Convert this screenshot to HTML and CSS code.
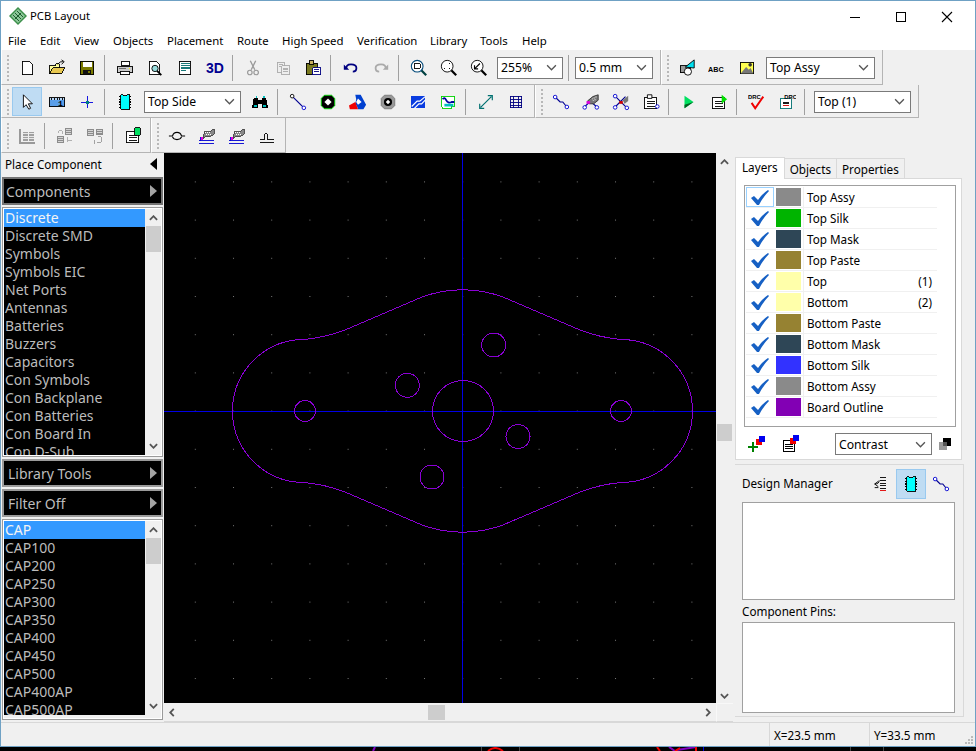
FILE: index.html
```html
<!DOCTYPE html>
<html lang="en">
<head>
  <meta charset="UTF-8">
  <title>PCB Layout</title>
  <link rel="stylesheet" href="styles.css">
</head>
<body>

<svg class="defs" width="0" height="0">
  <defs>
    <symbol id="check" viewBox="0 0 18 15"><path d="M0 8 3 6 7 10Q11 4 17 0L18 1Q12 7 8 15H6Z" fill="#1660c4"/></symbol>
    <symbol id="chip" viewBox="0 0 20 20"><g shape-rendering="crispEdges"><path d="M3 4h2M3 7h2M3 10h2M3 13h2M3 16h2M15 4h2M15 7h2M15 10h2M15 13h2M15 16h2" stroke="#000" stroke-width="1.5"/><path d="M5 2h3v1h4V2h3v16H5z" fill="#00ffff" stroke="#000"/></g></symbol>
    <symbol id="route" viewBox="0 0 20 20"><path d="M4 5 9 10H12L16 15" fill="none" stroke="#000090" stroke-width="1.3"/><circle cx="3.5" cy="4.5" r="2" fill="#fff" stroke="#0000d0"/><circle cx="16.5" cy="15.5" r="2" fill="#fff" stroke="#0000d0"/></symbol>
    <symbol id="tablist" viewBox="0 0 20 20"><g shape-rendering="crispEdges"><path d="M2.500 5.500h14v12h-14z" fill="#fff" stroke="#000"/><path d="M5 9h9M5 12h9M5 15h9" stroke="#000"/></g></symbol>
    <symbol id="mag" viewBox="0 0 20 20"><path d="M12 12 18 18" stroke="#000" stroke-width="2.500"/><circle cx="8" cy="8" r="6.500" fill="#fff" stroke="#000"/></symbol>
    <symbol id="hand" viewBox="0 0 20 20"><g shape-rendering="crispEdges"><path d="M7 5h6l5-3v6l-5 3H8l-3 3z" fill="#888" stroke="#444"/><path d="M8 6h1v1H8zM10 6h1v1h-1zM12 6h1v1h-1zM9 8h1v1H9zM11 8h1v1h-1zM13 8h1v1h-1z" fill="#fff"/><path d="M3 11h3v3H3z" fill="#e000e0"/><path d="M3 11v4" stroke="#0000d0"/><path d="M1 15.500h17M1 18.500h17" stroke="#0000d0"/></g></symbol>
  </defs>
</svg>

<div class="window">

  <div class="titlebar">
    <svg class="app-icon" width="18" height="18" viewBox="0 0 18 18"><path d="M9 0 18 9 9 18 0 9Z" fill="#3c8f4a"/><path d="M9 2 16 9 9 16 2 9Z" fill="#8ec79a"/><path d="M6 6 12 12M8 4 14 10M4 8 10 14M6 12 12 6" stroke="#1d5e2d" stroke-width="1"/></svg>
    <span class="app-name">PCB Layout</span>
    <div class="win-controls">
      <svg width="12" height="12" viewBox="0 0 12 12"><path d="M1 6.500h10" stroke="#000" shape-rendering="crispEdges"/></svg>
      <svg width="12" height="12" viewBox="0 0 12 12"><path d="M1.500 1.500h9v9h-9z" fill="none" stroke="#000" shape-rendering="crispEdges"/></svg>
      <svg width="12" height="12" viewBox="0 0 12 12"><path d="M1 1 11 11M11 1 1 11" stroke="#000" stroke-width="1.100"/></svg>
    </div>
  </div>

  <div class="menubar">
    <span class="menu-file">File</span>
    <span class="menu-edit">Edit</span>
    <span class="menu-view">View</span>
    <span class="menu-objects">Objects</span>
    <span class="menu-placement">Placement</span>
    <span class="menu-route">Route</span>
    <span class="menu-speed">High Speed</span>
    <span class="menu-verify">Verification</span>
    <span class="menu-library">Library</span>
    <span class="menu-tools">Tools</span>
    <span class="menu-help">Help</span>
  </div>

  <!-- toolbar row 1 -->
  <div class="row row-a">
    <div class="bar bar-wide">
      <i class="grip"></i>
      <b class="btn"><svg viewBox="0 0 20 20"><path d="M4.500 2.500h8l4 4v11h-12z" fill="#fff" stroke="#000" shape-rendering="crispEdges"/></svg></b>
      <b class="btn"><svg viewBox="0 0 20 20"><g shape-rendering="crispEdges"><path d="M1.500 7.500h7v-2h4v11h-11z" fill="#ffff99" stroke="#000"/><path d="M1.500 16.500 5 9.500h14l-4 7z" fill="#e8c850" stroke="#000"/></g><path d="M11 6Q13 2 17 3M15 1 18 3 15 6" fill="none" stroke="#000"/></svg></b>
      <b class="btn"><svg viewBox="0 0 20 20"><g shape-rendering="crispEdges"><path d="M2.500 2.500h15v15h-15z" fill="#7a7a00" stroke="#000"/><path d="M5 3h10v6H5z" fill="#fff"/><path d="M6 12h8v5H6z" fill="#111"/><path d="M11 13h2v3h-2z" fill="#7a7a00"/></g></svg></b>
      <i class="sep"></i>
      <b class="btn"><svg viewBox="0 0 20 20"><g shape-rendering="crispEdges"><path d="M6.500 2.500h8v5h-8z" fill="#fff" stroke="#000"/><path d="M1.500 8.500h17v7h-17z" fill="#ccc" stroke="#000"/><path d="M4.500 13.500h11v4h-11z" fill="#fff" stroke="#000"/><path d="M3 10h8" stroke="#666"/><path d="M14 10h2v1h-2z" fill="#ff0"/></g></svg></b>
      <b class="btn"><svg viewBox="0 0 20 20"><path d="M3.500 2.500h8l3 3v12h-11z" fill="#fff" stroke="#000" shape-rendering="crispEdges"/><path d="M12 13 17 18" stroke="#000" stroke-width="2"/><circle cx="10" cy="10.500" r="3.500" fill="#9dd" stroke="#000"/></svg></b>
      <b class="btn"><svg viewBox="0 0 20 20"><g shape-rendering="crispEdges"><path d="M3.500 2.500h13v15h-13z" fill="#fff" stroke="#000"/><path d="M5 5h10M5 7h10M5 9h10M5 11h10M5 13h6" stroke="#006a6a"/></g></svg></b>
      <b class="btn text3d">3D</b>
      <i class="sep"></i>
      <b class="btn"><svg viewBox="0 0 20 20"><path d="M7 2 12 12M13 2 8 12" stroke="#999" stroke-width="1.500"/><circle cx="6.500" cy="15" r="2.500" fill="none" stroke="#999" stroke-width="1.300"/><circle cx="13.500" cy="15" r="2.500" fill="none" stroke="#999" stroke-width="1.300"/></svg></b>
      <b class="btn"><svg viewBox="0 0 20 20"><g shape-rendering="crispEdges"><path d="M3.500 3.500h8v11h-8z" fill="#eee" stroke="#aaa"/><path d="M8.500 7.500h9v10h-9z" fill="#eee" stroke="#aaa"/><path d="M10 10h6M10 12h6M10 14h6M5 6h5M5 8h3" stroke="#aaa"/></g></svg></b>
      <b class="btn"><svg viewBox="0 0 20 20"><g shape-rendering="crispEdges"><path d="M2.500 4.500h12v13h-12z" fill="#7a7a20" stroke="#000"/><path d="M6 2h5v4H6z" fill="#c8b060" stroke="#000"/><path d="M9.500 9.500h9v8h-9z" fill="#fff" stroke="#000080"/><path d="M11 12h6M11 14h6" stroke="#000080"/></g></svg></b>
      <i class="sep"></i>
      <b class="btn"><svg viewBox="0 0 20 20"><path d="M5 11Q4 6 10 6T16 10 12 14" fill="none" stroke="#000080" stroke-width="2"/><path d="M2 6 8 12H2Z" fill="#000080"/></svg></b>
      <b class="btn"><svg viewBox="0 0 20 20"><path d="M15 11Q16 6 10 6T4 10 8 14" fill="none" stroke="#aaa" stroke-width="2"/><path d="M18 6 12 12H18Z" fill="#aaa"/></svg></b>
      <i class="sep"></i>
      <b class="btn"><svg viewBox="0 0 20 20"><path d="M12 12 18 18" stroke="#004040" stroke-width="2.500"/><circle cx="8" cy="8" r="6.500" fill="#fff" stroke="#004878" stroke-width="1.200"/><path d="M4.500 5.500h7v5h-7z" fill="#fff" stroke="#000" shape-rendering="crispEdges"/></svg></b>
      <b class="btn"><svg viewBox="0 0 20 20"><use href="#mag"/><path d="M5 6V5h1M10 5h1v1M11 10v1h-1M6 11H5v-1" fill="none" stroke="#000" shape-rendering="crispEdges"/></svg></b>
      <b class="btn"><svg viewBox="0 0 20 20"><use href="#mag"/><path d="M11 5 5 11M5 7v4h4" fill="none" stroke="#000" stroke-width="1.300"/></svg></b>
      <span class="combo combo-zoom">255%<svg class="chev" viewBox="0 0 10 6"><path d="M1 1 5 5 9 1" fill="none" stroke="#555" stroke-width="1.200"/></svg></span>
      <i class="sep sep-tight"></i>
      <span class="combo combo-grid">0.5 mm<svg class="chev" viewBox="0 0 10 6"><path d="M1 1 5 5 9 1" fill="none" stroke="#555" stroke-width="1.200"/></svg></span>
    </div>
    <div class="bar bar-assy">
      <i class="grip"></i>
      <b class="btn"><svg viewBox="0 0 20 20"><g shape-rendering="crispEdges"><path d="M2.500 7.500h11v8h-11z" fill="#999" stroke="#000"/></g><circle cx="11" cy="14" r="4" fill="#fff" stroke="#000"/><path d="M8 9 18 1V10Z" fill="#00e0f0" stroke="#000"/></svg></b>
      <b class="btn"><svg viewBox="0 0 20 20"><text class="tiny-caps" x="0" y="14">ABC</text></svg></b>
      <b class="btn"><svg viewBox="0 0 20 20"><g shape-rendering="crispEdges"><path d="M2.500 3.500h15v13h-15z" fill="#ffff50" stroke="#000"/></g><path d="M3 16 9 9 12 12 14 10 17 16Z" fill="#777"/><circle cx="13.500" cy="6.500" r="2" fill="#333"/></svg></b>
      <span class="combo combo-assy">Top Assy<svg class="chev" viewBox="0 0 10 6"><path d="M1 1 5 5 9 1" fill="none" stroke="#555" stroke-width="1.200"/></svg></span>
    </div>
  </div>

  <!-- toolbar row 2 -->
  <div class="row row-b">
    <div class="bar bar-place">
      <i class="grip"></i>
      <b class="btn btn-on"><svg viewBox="0 0 20 20"><path d="M6 2V16L9 13 12 18 14 17 11.500 12H16Z" fill="#fff" stroke="#000"/></svg></b>
      <b class="btn"><svg viewBox="0 0 20 20"><g shape-rendering="crispEdges"><path d="M1.500 5.500h17v10h-17z" fill="#5a9ee8" stroke="#000"/><path d="M2 6h16v2H2z" fill="#b8d8f8"/><path d="M4 5v3M7 5v3M10 5v3M13 5v3M16 5v3" stroke="#000"/></g><text class="tiny-num" x="11" y="14.500">1</text></svg></b>
      <b class="btn"><svg viewBox="0 0 20 20"><g shape-rendering="crispEdges"><path d="M3 10.500h14M10.500 3v14" stroke="#0000e0"/><path d="M9 9h3v3H9z" fill="#008080"/></g></svg></b>
      <i class="sep"></i>
      <b class="btn"><svg viewBox="0 0 20 20"><use href="#chip"/></svg></b>
      <span class="combo combo-side">Top Side<svg class="chev" viewBox="0 0 10 6"><path d="M1 1 5 5 9 1" fill="none" stroke="#555" stroke-width="1.200"/></svg></span>
      <b class="btn btn-after-combo"><svg viewBox="0 0 20 20"><g shape-rendering="crispEdges"><path d="M3 6h5v2h4V6h5l2 11h-7v-5H8v5H1z" fill="#000"/><path d="M3 13h4v3H3zM13 13h4v3h-4zM5 3h2v3H5zM13 3h2v3h-2z" fill="#00c0c0"/></g></svg></b>
      <i class="sep"></i>
      <b class="btn"><svg viewBox="0 0 20 20"><path d="M4 4 16 16" stroke="#000090" stroke-width="1.300"/><circle cx="3.500" cy="3.500" r="2" fill="#fff" stroke="#000"/><circle cx="16.500" cy="16.500" r="2" fill="#fff" stroke="#0000d0"/></svg></b>
      <b class="btn"><svg viewBox="0 0 20 20"><path d="M6 2.500h8L17.500 6v8L14 17.500H6L2.500 14V6Z" fill="#000" stroke="#00e000"/><path d="M10 6 14 10 10 14 6 10Z" fill="#fff"/></svg></b>
      <b class="btn"><svg viewBox="0 0 20 20"><path d="M7 2h6L19 13 16 18H10L9 15 7 12 8 7Z" fill="#0040d0"/><path d="M0 14 7 10 10 18H1Z" fill="#f00000"/><path d="M10 6 14 10 10 13 8 10Z" fill="#fff"/></svg></b>
      <b class="btn"><svg viewBox="0 0 20 20"><path d="M6 2.500h8L17.500 6v8L14 17.500H6L2.500 14V6Z" fill="#999" stroke="#777"/><circle cx="10" cy="10" r="4.500" fill="#000"/><path d="M10 7.500 12.500 10 10 12.500 7.500 10Z" fill="#fff"/></svg></b>
      <b class="btn"><svg viewBox="0 0 20 20"><path d="M2 3h16v14H2z" fill="#0a3ce0" shape-rendering="crispEdges"/><path d="M3 15 9 9H12L18 4M6 17 11 12H14L18 8" fill="none" stroke="#fff" stroke-width="1.300"/></svg></b>
      <b class="btn"><svg viewBox="0 0 20 20"><g shape-rendering="crispEdges"><path d="M2.500 3.500h15v11h-4v3h-9l-2-4z" fill="#fff" stroke="#00d000"/></g><path d="M4 7Q6 4 8 8T14 10H17" fill="none" stroke="#0000a0" stroke-width="2"/><path d="M6 12h10v3H6z" fill="#00c0c0"/></svg></b>
      <i class="sep"></i>
      <b class="btn"><svg viewBox="0 0 20 20"><path d="M4 16 16 4M3 12V17H8M12 3H17V8" fill="none" stroke="#007070" stroke-width="1.300"/></svg></b>
      <b class="btn"><svg viewBox="0 0 20 20"><path d="M3.500 3.500h13v13h-13zM3 7.500h14M3 10.500h14M3 13.500h14M7.500 3v14M12.500 3v14" fill="none" stroke="#000080" shape-rendering="crispEdges"/></svg></b>
    </div>
    <div class="bar bar-check">
      <i class="grip"></i>
      <b class="btn"><svg viewBox="0 0 20 20"><use href="#route"/></svg></b>
      <b class="btn"><svg viewBox="0 0 20 20"><path d="M10 9 3 15M9 9 16 15" stroke="#000090" stroke-width="1.200"/><circle cx="3" cy="16" r="2" fill="#fff" stroke="#0000d0"/><circle cx="16.500" cy="16" r="2" fill="#fff" stroke="#0000d0"/><path d="M6 9 12 4 18 2V8L13 12H8Z" fill="#777" stroke="#333"/><path d="M5 9h4v3H5z" fill="#e000e0"/><path d="M11 6h1v1h-1zM13 5h1v1h-1zM15 4h1v1h-1zM12 8h1v1h-1zM14 7h1v1h-1z" fill="#fff"/></svg></b>
      <b class="btn"><svg viewBox="0 0 20 20"><path d="M4 4 16 16M15 4 4 15" stroke="#000090" stroke-width="1.300"/><circle cx="3.500" cy="3.500" r="2" fill="#fff" stroke="#0000d0"/><circle cx="3.500" cy="16" r="2" fill="#fff" stroke="#0000d0"/><circle cx="16.500" cy="16.500" r="2" fill="#fff" stroke="#0000d0"/><path d="M8 9h4v3H8z" fill="#d00000"/><path d="M12 8 18 3V9L14 12Z" fill="#777"/></svg></b>
      <b class="btn"><svg viewBox="0 0 20 20"><use href="#tablist"/><path d="M6 2h5v4H6z" fill="#fff" stroke="#000"/><circle cx="17" cy="15" r="2" fill="#fff" stroke="#0000d0"/></svg></b>
      <i class="sep"></i>
      <b class="btn"><svg viewBox="0 0 20 20"><path d="M5 3 15 10 5 17Z" fill="#00e060"/><path d="M15 10 5 17V13Z" fill="#006020"/></svg></b>
      <b class="btn"><svg viewBox="0 0 20 20"><use href="#tablist"/><path d="M13 2 19 7 13 12Z" fill="#00e000"/></svg></b>
      <i class="sep"></i>
      <b class="btn"><svg viewBox="0 0 20 20"><text class="tiny-drc" x="0" y="7">DRC</text><path d="M4 11 8 17 17 4" fill="none" stroke="#f00000" stroke-width="2.200"/></svg></b>
      <b class="btn"><svg viewBox="0 0 20 20"><path d="M2.500 6.500h12v11h-12z" fill="#fff" stroke="#007070" shape-rendering="crispEdges"/><path d="M5 10h7M5 12h7" stroke="#000" shape-rendering="crispEdges"/><path d="M5 14h7" stroke="#d00000" shape-rendering="crispEdges"/><text class="tiny-drc" x="7" y="6.500">DRC</text></svg></b>
      <i class="sep"></i>
      <span class="combo combo-layer">Top (1)<svg class="chev" viewBox="0 0 10 6"><path d="M1 1 5 5 9 1" fill="none" stroke="#555" stroke-width="1.200"/></svg></span>
    </div>
  </div>

  <!-- toolbar row 3 -->
  <div class="row row-c">
    <div class="bar bar-lib">
      <i class="grip"></i>
      <b class="btn"><svg viewBox="0 0 20 20"><g shape-rendering="crispEdges"><path d="M2 2v16h17" fill="none" stroke="#999" stroke-width="2"/><path d="M5 5h6v10H5zM12 5h6v10h-6z" fill="#a0a0a0"/><path d="M5 7h6M5 10h6M5 13h6M12 7h6M12 10h6M12 13h6" stroke="#eee"/></g></svg></b>
      <i class="sep"></i>
      <b class="btn"><svg viewBox="0 0 20 20"><g shape-rendering="crispEdges"><path d="M10 1h8v8h-8zM1 10h8v8H1z" fill="#8c8c8c"/><path d="M11 3h6M11 5h6M11 7h6M2 12h6M2 14h6M2 16h6" stroke="#ddd"/><path d="M3 4h4v4M3 4v3M13 15H18M13 11v6" fill="none" stroke="#aaa"/></g></svg></b>
      <b class="btn"><svg viewBox="0 0 20 20"><g shape-rendering="crispEdges"><path d="M1 2h8v8H1zM11 2h8v7h-8z" fill="#8c8c8c"/><path d="M2 4h6M2 6h6M2 8h6M12 4h6M12 6h6" stroke="#ddd"/><path d="M13 11h4v6h-5M9 14v5" fill="none" stroke="#999"/></g></svg></b>
      <i class="sep"></i>
      <b class="btn"><svg viewBox="0 0 20 20"><use href="#tablist"/><path d="M12 1h6v8h-6z" fill="#00e060" stroke="#000" shape-rendering="crispEdges"/></svg></b>
    </div>
    <div class="bar bar-shape">
      <i class="grip"></i>
      <b class="btn"><svg viewBox="0 0 20 20"><path d="M1 10H5Q6 6 10 6T15 10H19M5 11Q6 14 10 14T15 11" fill="none" stroke="#000" stroke-width="1.200"/></svg></b>
      <b class="btn"><svg viewBox="0 0 20 20"><use href="#hand"/></svg></b>
      <b class="btn"><svg viewBox="0 0 20 20"><use href="#hand"/></svg></b>
      <b class="btn"><svg viewBox="0 0 20 20"><path d="M2 14H7V10Q7 7 9 7T11 10V14H18M2 17H18" fill="none" stroke="#000" shape-rendering="crispEdges"/></svg></b>
    </div>
  </div>

  <div class="main">

    <div class="left">
      <div class="head">Place Component<i class="tri tri-left"></i></div>
      <div class="black-bar">Components<i class="tri"></i></div>
      <div class="listbox list-cats">
        <ul class="items">
          <li class="sel">Discrete</li>
          <li>Discrete SMD</li>
          <li>Symbols</li>
          <li>Symbols EIC</li>
          <li>Net Ports</li>
          <li>Antennas</li>
          <li>Batteries</li>
          <li>Buzzers</li>
          <li>Capacitors</li>
          <li>Con Symbols</li>
          <li>Con Backplane</li>
          <li>Con Batteries</li>
          <li>Con Board In</li>
          <li>Con D-Sub</li>
        </ul>
        <div class="mini-scroll">
          <svg viewBox="0 0 10 6"><path d="M1 5 5 1 9 5" fill="none" stroke="#555" stroke-width="2"/></svg>
          <i class="mini-thumb"></i>
          <svg class="down" viewBox="0 0 10 6"><path d="M1 1 5 5 9 1" fill="none" stroke="#555" stroke-width="2"/></svg>
        </div>
      </div>
      <div class="black-bar bar-lib-tools">Library Tools<i class="tri"></i></div>
      <div class="black-bar bar-filter">Filter Off<i class="tri"></i></div>
      <div class="listbox list-parts">
        <ul class="items">
          <li class="sel">CAP</li>
          <li>CAP100</li>
          <li>CAP200</li>
          <li>CAP250</li>
          <li>CAP300</li>
          <li>CAP350</li>
          <li>CAP400</li>
          <li>CAP450</li>
          <li>CAP500</li>
          <li>CAP400AP</li>
          <li>CAP500AP</li>
        </ul>
        <div class="mini-scroll">
          <svg viewBox="0 0 10 6"><path d="M1 5 5 1 9 5" fill="none" stroke="#555" stroke-width="2"/></svg>
          <i class="mini-thumb"></i>
          <svg class="down" viewBox="0 0 10 6"><path d="M1 1 5 5 9 1" fill="none" stroke="#555" stroke-width="2"/></svg>
        </div>
      </div>
    </div>

    <div class="center">
      <div class="canvas">
        <svg class="board" width="552" height="550" viewBox="164 153 552 550">
          <defs>
            <pattern id="dots" x="233" y="296" width="38.200" height="38.200" patternUnits="userSpaceOnUse">
              <rect width="1" height="1" fill="#777"/>
            </pattern>
          </defs>
          <rect x="164" y="153" width="552" height="550" fill="url(#dots)"/>
          <path class="axis" d="M164 411.500H716M462.500 153V703"/>
          <g class="outline">
            <path d="M232.500 411A71.500 71.500 0 0 1 304 339.500C320 338 332 335 345 330L423 296.600A121 121 0 0 1 502 296.600L580 330C593 335 605 338 621 339.500A71.500 71.500 0 0 1 621 482.500C605 484 593 487 580 492L502 525.400A121 121 0 0 1 423 525.400L345 492C332 487 320 484 304 482.500A71.500 71.500 0 0 1 232.500 411Z"/>
            <circle cx="305" cy="411" r="10.500"/>
            <circle cx="407.300" cy="385.300" r="12"/>
            <circle cx="493.700" cy="345" r="12"/>
            <circle cx="463" cy="411" r="30.500"/>
            <circle cx="518" cy="436.500" r="12"/>
            <circle cx="432" cy="477" r="12"/>
            <circle cx="621" cy="411" r="10.500"/>
          </g>
        </svg>
      </div>
      <div class="vscroll">
        <svg viewBox="0 0 10 6"><path d="M1 5 5 1 9 5" fill="none" stroke="#555" stroke-width="2"/></svg>
        <i class="thumb-v"></i>
        <svg viewBox="0 0 10 6"><path d="M1 1 5 5 9 1" fill="none" stroke="#555" stroke-width="2"/></svg>
      </div>
      <div class="hscroll">
        <svg viewBox="0 0 6 10"><path d="M5 1 1 5 5 9" fill="none" stroke="#555" stroke-width="2"/></svg>
        <i class="thumb-h"></i>
        <svg viewBox="0 0 6 10"><path d="M1 1 5 5 1 9" fill="none" stroke="#555" stroke-width="2"/></svg>
      </div>
      <div class="corner"></div>
    </div>

    <div class="right">
      <div class="tabs">
        <span class="tab tab-on">Layers</span>
        <span class="tab">Objects</span>
        <span class="tab">Properties</span>
      </div>
      <div class="layers-page">
        <div class="layer-list">
          <div class="layer focus"><span class="lc"><svg><use href="#check"/></svg></span><i class="sw sw-gray"></i><span class="ln">Top Assy</span></div>
          <div class="layer"><span class="lc"><svg><use href="#check"/></svg></span><i class="sw sw-green"></i><span class="ln">Top Silk</span></div>
          <div class="layer"><span class="lc"><svg><use href="#check"/></svg></span><i class="sw sw-mask"></i><span class="ln">Top Mask</span></div>
          <div class="layer"><span class="lc"><svg><use href="#check"/></svg></span><i class="sw sw-paste"></i><span class="ln">Top Paste</span></div>
          <div class="layer"><span class="lc"><svg><use href="#check"/></svg></span><i class="sw sw-copper"></i><span class="ln">Top<em>(1)</em></span></div>
          <div class="layer"><span class="lc"><svg><use href="#check"/></svg></span><i class="sw sw-copper"></i><span class="ln">Bottom<em>(2)</em></span></div>
          <div class="layer"><span class="lc"><svg><use href="#check"/></svg></span><i class="sw sw-paste"></i><span class="ln">Bottom Paste</span></div>
          <div class="layer"><span class="lc"><svg><use href="#check"/></svg></span><i class="sw sw-mask"></i><span class="ln">Bottom Mask</span></div>
          <div class="layer"><span class="lc"><svg><use href="#check"/></svg></span><i class="sw sw-blue"></i><span class="ln">Bottom Silk</span></div>
          <div class="layer"><span class="lc"><svg><use href="#check"/></svg></span><i class="sw sw-gray"></i><span class="ln">Bottom Assy</span></div>
          <div class="layer"><span class="lc"><svg><use href="#check"/></svg></span><i class="sw sw-purple"></i><span class="ln">Board Outline</span></div>
        </div>
        <div class="layer-tools">
          <svg width="18" height="18" viewBox="0 0 18 18"><g shape-rendering="crispEdges"><path d="M0 11h10v2H0zM4 7h2v10H4z" fill="#008000"/><path d="M8 4h6v6H8z" fill="#f00000"/><path d="M11 1h6v6h-6z" fill="#0000f0"/></g></svg>
          <svg width="18" height="18" viewBox="0 0 18 18"><g shape-rendering="crispEdges"><path d="M1.500 5.500h11v11h-11z" fill="#fff" stroke="#000"/><path d="M3 9h8M3 11h8M3 13h8" stroke="#000"/><path d="M8 3h6v6H8z" fill="#f00000"/><path d="M11 0h6v6h-6z" fill="#0000f0"/></g></svg>
          <span class="combo combo-contrast">Contrast<svg class="chev" viewBox="0 0 10 6"><path d="M1 1 5 5 9 1" fill="none" stroke="#555" stroke-width="1.200"/></svg></span>
          <svg width="12" height="12" viewBox="0 0 12 12"><g shape-rendering="crispEdges"><path d="M0 4h8v8H0z" fill="#999"/><path d="M4 0h8v8H4z" fill="#000"/><path d="M4 4h4v4H4z" fill="#555"/></g></svg>
        </div>
      </div>
      <div class="design">
        <div class="design-head">
          <span class="design-title">Design Manager</span>
          <b class="dm-btn"><svg viewBox="0 0 20 20"><g shape-rendering="crispEdges"><path d="M9 3h7M9 6h7M9 9h7M9 12h7M9 15h7" stroke="#000"/><path d="M9 17.500h7" stroke="#e00000"/></g><path d="M7 7 3 10 7 13M3 10Q8 10 8 6M3 14 7 14" fill="none" stroke="#000"/></svg></b>
          <b class="dm-btn dm-on"><svg viewBox="0 0 20 20"><use href="#chip"/></svg></b>
          <b class="dm-btn"><svg viewBox="0 0 20 20"><use href="#route"/></svg></b>
        </div>
        <div class="white-box box-top"></div>
        <div class="pins-label">Component Pins:</div>
        <div class="white-box box-pins"></div>
      </div>
    </div>

  </div>

  <div class="status">
    <span class="st-fill"></span>
    <span class="st-cell st-x">X=23.5 mm</span>
    <span class="st-cell st-y">Y=33.5 mm</span>
    <svg class="st-grip" width="10" height="10" viewBox="0 0 10 10"><path d="M7 1h2v2H7zM4 4h2v2H4zM7 4h2v2H7zM1 7h2v2H1zM4 7h2v2H4zM7 7h2v2H7z" fill="#bbb"/></svg>
  </div>

</div>

<!-- bits of whatever sits behind the window -->
<svg class="behind" width="976" height="4" viewBox="0 747 976 4">
  <path d="M375 747 373 751" stroke="#8000c0" stroke-width="2"/>
  <path d="M488 751Q495 745 503 751" fill="none" stroke="#f00000" stroke-width="2"/>
  <path d="M657 747 660 751" stroke="#f00000" stroke-width="2"/>
  <path d="M669 747 675 751M677 750 696 747" stroke="#8000c0" stroke-width="2"/>
  <path d="M675 751 680 748" stroke="#f00000" stroke-width="2"/>
  <path d="M696 747V751" stroke="#f00000" stroke-width="2"/>
  <path d="M703.500 747V751" stroke="#0000e0"/>
  <path d="M481.500 747V751M519.500 747V751M850.500 747V751M883.500 747V751" stroke="#444"/>
</svg>

</body>
</html>
```

FILE: styles.css
```css
* {
  box-sizing: border-box;
}

html, body {
  margin: 0;
  padding: 0;
  background: #000;
  overflow: hidden;
}

body {
  width: 976px;
  height: 751px;
  font-family: 'Noto Sans', 'Liberation Sans', sans-serif;
  font-size: 11.7px;
  color: #000;
}

.defs {
  display: block;
  height: 0;
}

.window {
  width: 976px;
  height: 747px;
  border: 1px solid #6fa1c4;
  background: #f0f0f0;
  display: flex;
  flex-direction: column;
}

.behind {
  display: block;
}

/* title + menu */
.titlebar {
  height: 30px;
  flex: none;
  background: #fff;
  display: flex;
  align-items: center;
  padding-left: 8px;
  gap: 3px;
}

.app-name {
  font-size: 11.300px;
  margin-bottom: 2px;
}

.win-controls {
  margin-left: auto;
  display: flex;
  gap: 34px;
  padding-right: 22px;
  margin-top: 1px;
}

.menubar {
  height: 19px;
  flex: none;
  background: #fff;
  display: flex;
  align-items: center;
  font-size: 11.400px;
  padding-left: 7px;
}

.menubar span {
  display: block;
  white-space: nowrap;
}

.menu-file { width: 32px; }
.menu-edit { width: 34px; }
.menu-view { width: 39px; }
.menu-objects { width: 54px; }
.menu-placement { width: 70px; }
.menu-route { width: 45px; }
.menu-speed { width: 75px; }
.menu-verify { width: 73px; }
.menu-library { width: 50px; }
.menu-tools { width: 42px; }

/* toolbars */
.row {
  flex: none;
  display: flex;
  align-items: stretch;
}

.row-a { height: 35px; }
.row-b { height: 33px; }
.row-c { height: 35px; }

.bar {
  display: flex;
  align-items: center;
  border-right: 1px solid #b4b4b4;
  border-bottom: 1px solid #b4b4b4;
  border-left: 1px solid #fff;
  padding: 1px 0 0 3px;
}

.bar-wide { width: 660px; }
.bar-assy { width: 222px; }
.bar-place { width: 534px; }
.bar-check { width: 384px; }
.bar-lib { width: 150px; }
.bar-shape { width: 135px; }

.grip {
  width: 2px;
  height: 26px;
  margin: 0 3px 0 2px;
  flex: none;
  background: repeating-linear-gradient(to bottom, #b8b8b8 0 2px, transparent 2px 4px);
}

.btn {
  width: 30px;
  height: 29px;
  flex: none;
  display: flex;
  align-items: center;
  justify-content: center;
  border: 1px solid transparent;
}

.btn svg {
  width: 18px;
  height: 18px;
  display: block;
}

.btn-on {
  background: #bfdcf3;
  border-color: #99c9ef;
}

.text3d {
  font-family: 'Liberation Sans', sans-serif;
  font-size: 14px;
  font-weight: bold;
  color: #000090;
}

.sep {
  width: 1px;
  height: 26px;
  flex: none;
  margin: 0 5px 0 2px;
  background: #a0a0a0;
}

.sep-tight {
  margin: 0 6px 0 5px;
}

.combo {
  height: 22px;
  flex: none;
  display: flex;
  align-items: center;
  justify-content: space-between;
  padding: 0 5px 0 3px;
  background: #fff;
  border: 1px solid #7a7a7a;
  font-size: 12.200px;
  white-space: nowrap;
}

.chev {
  width: 11px;
  height: 7px;
  flex: none;
}

.combo-zoom { width: 66px; margin-left: 3px; }
.combo-grid { width: 78px; }
.combo-assy { width: 109px; margin-left: 4px; }
.combo-side { width: 97px; margin-left: 4px; }
.btn-after-combo { margin-left: 4px; }
.combo-layer { width: 97px; margin-left: 4px; }
.combo-contrast { width: 97px; }

.tiny-caps {
  font-family: 'Liberation Sans', sans-serif;
  font-size: 8px;
  font-weight: bold;
}

.tiny-num {
  font-family: 'Liberation Mono', monospace;
  font-size: 9px;
  font-weight: bold;
}

.tiny-drc {
  font-family: 'Liberation Sans', sans-serif;
  font-size: 6.500px;
  font-weight: bold;
}

/* main area */
.main {
  height: 569px;
  flex: none;
  display: flex;
}

.left {
  width: 163px;
  flex: none;
  display: flex;
  flex-direction: column;
  padding: 0 1px;
}

.head {
  height: 24px;
  flex: none;
  display: flex;
  align-items: center;
  justify-content: space-between;
  padding: 0 6px 2px 3px;
}

.tri {
  width: 0;
  height: 0;
  border-top: 6px solid transparent;
  border-bottom: 6px solid transparent;
  border-left: 7px solid #a4a4a4;
}

.tri-left {
  border-left: 0;
  border-right: 7px solid #000;
}

.black-bar {
  height: 28px;
  flex: none;
  display: flex;
  align-items: center;
  justify-content: space-between;
  padding: 0 4px 0 2px;
  background: #000;
  border: 2px solid #747474;
  color: #bdbdbd;
  font-size: 14px;
}

.bar-lib-tools {
  margin-top: 2px;
  padding-left: 4px;
  border-color: #9a9a9a;
}

.bar-filter {
  margin-top: 2px;
  padding-left: 4px;
  border-color: #9a9a9a;
}

.listbox {
  flex: none;
  display: flex;
  background: #f0f0f0;
  border: 1px solid #9a9a9a;
  outline: 1px solid #fff;
  outline-offset: -2px;
  overflow: hidden;
}

.list-cats {
  height: 250px;
  margin-top: 2px;
  padding: 1px;
}

.list-parts {
  height: 201px;
  margin-top: 2px;
  padding: 1px 1px 4px;
}

.items {
  list-style: none;
  margin: 0;
  padding: 0;
  width: 141px;
  flex: none;
  background: #000;
  overflow: hidden;
}

.items li {
  height: 18px;
  line-height: 18px;
  padding-left: 1px;
  color: #bcbcbc;
  font-size: 14px;
  white-space: nowrap;
}

.items li.sel {
  background: #3399ff;
  color: #f4f4f4;
}

.mini-scroll {
  width: 15px;
  flex: none;
  margin-left: 1px;
  display: flex;
  flex-direction: column;
  align-items: center;
}

.mini-scroll svg {
  width: 9px;
  height: 6px;
  margin-top: 6px;
  flex: none;
}

.mini-scroll svg.down {
  margin-top: auto;
  margin-bottom: 6px;
}

.mini-thumb {
  width: 15px;
  height: 26px;
  margin-top: 5px;
  background: #cdcdcd;
  flex: none;
}

.center {
  width: 570px;
  flex: none;
  display: grid;
  grid-template-columns: 552px 17px;
  grid-template-rows: 550px 19px;
}

.canvas {
  background: #000;
  overflow: hidden;
}

.board {
  display: block;
}

.axis {
  stroke: #0000e6;
  stroke-width: 1;
  fill: none;
  shape-rendering: crispEdges;
}

.outline path,
.outline circle {
  fill: none;
  stroke: #8a00d4;
  stroke-width: 1;
  shape-rendering: crispEdges;
}

.vscroll {
  display: flex;
  flex-direction: column;
  align-items: center;
  justify-content: space-between;
  padding: 6px 0 4px;
  background: #f0f0f0;
}

.vscroll svg {
  width: 9px;
  height: 6px;
}

.thumb-v {
  width: 15px;
  height: 17px;
  background: #cdcdcd;
  margin-top: 6px;
}

.hscroll {
  display: flex;
  align-items: center;
  justify-content: space-between;
  padding: 0 5px;
  border-bottom: 1px solid #d8d8d8;
}

.hscroll svg {
  width: 6px;
  height: 9px;
}

.thumb-h {
  width: 17px;
  height: 15px;
  background: #cdcdcd;
  margin-left: -8px;
}

.corner {
  border-left: 1px solid #f8f8f8;
  border-top: 1px solid #f8f8f8;
  border-bottom: 1px solid #d8d8d8;
}

.right {
  width: 240px;
  flex: none;
  display: flex;
  flex-direction: column;
  padding-left: 1px;
}

.tabs {
  height: 25px;
  flex: none;
  display: flex;
  align-items: flex-end;
}

.tab {
  height: 20px;
  padding: 0 5px;
  display: flex;
  align-items: center;
  background: #f0f0f0;
  border: 1px solid #d9d9d9;
  border-bottom: 0;
  margin-left: -1px;
}

.tab:first-child {
  margin-left: 0;
}

.tab-on {
  height: 22px;
  padding: 0 6px 4px;
  background: #fff;
  position: relative;
  z-index: 1;
  margin-bottom: -1px;
}

.layers-page {
  width: 227px;
  height: 282px;
  flex: none;
  background: #fff;
  border: 1px solid #d9d9d9;
  padding: 6px 5px 0 8px;
}

.layer-list {
  height: 242px;
  width: 212px;
  border: 1px solid #a0a0a0;
  padding: 1px;
}

.layer {
  width: 191px;
  height: 21px;
  display: flex;
  align-items: stretch;
  border-bottom: 1px solid #f0f0f0;
}

.lc {
  width: 28px;
  flex: none;
  display: flex;
  align-items: center;
  justify-content: center;
}

.lc svg {
  width: 18px;
  height: 15px;
}

.focus .lc {
  outline: 1px solid #99d1ff;
  outline-offset: -1px;
}

.sw {
  width: 25px;
  height: 18px;
  flex: none;
  margin: 1px 2px 0;
}

.sw-gray { background: #8a8a8a; }
.sw-green { background: #00b400; }
.sw-mask { background: #2e4656; }
.sw-paste { background: #968232; }
.sw-copper { background: #ffffaa; }
.sw-blue { background: #3232ff; }
.sw-purple { background: #8200b4; }

.ln {
  flex: 1;
  display: flex;
  justify-content: space-between;
  align-items: center;
  padding: 0 5px 0 3px;
  border-left: 1px solid #f0f0f0;
}

.ln em {
  font-style: normal;
}

.layer-tools {
  display: flex;
  align-items: center;
  margin-top: 6px;
  padding-left: 4px;
  height: 22px;
}

.layer-tools svg:nth-child(2) {
  margin-left: 16px;
}

.combo-contrast {
  margin-left: 35px;
}

.layer-tools > svg:last-child {
  margin-left: 7px;
}

.design {
  width: 229px;
  height: 253px;
  flex: none;
  margin-top: 4px;
  border-top: 1px solid #d9d9d9;
  border-right: 1px solid #d9d9d9;
  border-bottom: 1px solid #d9d9d9;
  padding: 4px 7px 0 7px;
}

.design-head {
  height: 30px;
  display: flex;
  align-items: center;
}

.design-title {
  margin-bottom: 3px;
}

.dm-btn {
  width: 30px;
  height: 30px;
  flex: none;
  display: flex;
  align-items: center;
  justify-content: center;
  border: 1px solid transparent;
}

.dm-btn:nth-child(2) {
  margin-left: auto;
}

.dm-btn svg {
  width: 18px;
  height: 18px;
}

.dm-on {
  background: #bfdcf3;
  border-color: #99c9ef;
}

.white-box {
  width: 213px;
  background: #fff;
  border: 1px solid #a0a0a0;
}

.box-top {
  height: 98px;
  margin-top: 3px;
}

.pins-label {
  height: 22px;
  line-height: 22px;
}

.box-pins {
  height: 91px;
}

/* status bar */
.status {
  flex: 1;
  display: flex;
  align-items: center;
  position: relative;
  border-top: 1px solid #d8d8d8;
}

.st-fill {
  width: 768px;
}

.st-cell {
  height: 100%;
  display: flex;
  align-items: center;
  padding-left: 4px;
  border-left: 1px solid #d8d8d8;
}

.st-x { width: 100px; }

.st-grip {
  position: absolute;
  right: 1px;
  bottom: 1px;
}
```
